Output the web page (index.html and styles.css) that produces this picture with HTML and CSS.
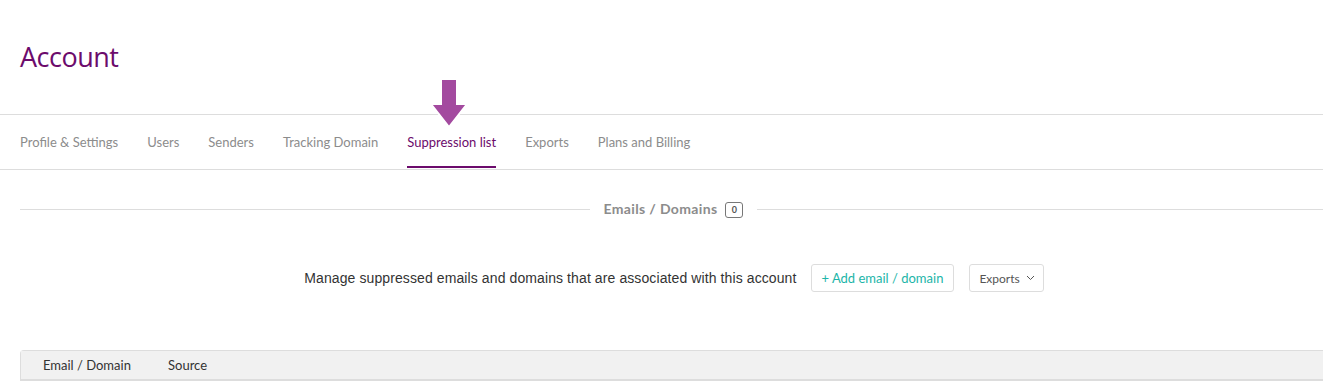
FILE: index.html
```html
<!DOCTYPE html>
<html lang="en">
<head>
  <meta charset="UTF-8">
  <title>Account - Suppression list</title>
  <link rel="stylesheet" href="styles.css">
</head>
<body>
  <header class="page-header">
    <h1>Account</h1>
  </header>

  <nav class="tabs">
    <a href="#">Profile &amp; Settings</a>
    <a href="#">Users</a>
    <a href="#">Senders</a>
    <a href="#">Tracking Domain</a>
    <a href="#" class="active">Suppression list
      <svg class="pointer" width="40" height="52" viewBox="0 0 40 52">
        <path d="M12 1h16v25h10L20 49 2 26h10z" fill="#a34a9f" stroke="#fff" stroke-width="2"/>
      </svg>
    </a>
    <a href="#">Exports</a>
    <a href="#">Plans and Billing</a>
  </nav>

  <div class="content">
    <div class="divider">
      <span class="divider-title">Emails / Domains <span class="count">0</span></span>
    </div>

    <div class="actions">
      <p>Manage suppressed emails and domains that are associated with this account</p>
      <button class="btn btn-add">+ Add email / domain</button>
      <button class="btn btn-export">Exports
        <svg width="9" height="6" viewBox="0 0 9 6"><path d="M1 1l3.5 3.5L8 1" fill="none" stroke="#555" stroke-width="1"/></svg>
      </button>
    </div>

    <div class="table">
      <div class="table-head">
        <span class="col-email">Email / Domain</span>
        <span class="col-source">Source</span>
      </div>
    </div>
  </div>
</body>
</html>
```

FILE: styles.css
```css
* {
  margin: 0;
  padding: 0;
  box-sizing: border-box;
}
body {
  background-color: #fff;
  font-family: 'Lato', sans-serif;
  overflow: hidden;
}
.page-header {
  height: 114px;
  padding: 38px 20px 0;
}
.page-header h1 {
  font-family: 'Open Sans', sans-serif;
  font-size: 27px;
  font-weight: 400;
  color: #6c0b6c;
  letter-spacing: -0.5px;
}
.tabs {
  display: flex;
  gap: 29px;
  height: 56px;
  padding: 0 20px;
  border-top: 1px solid #ddd;
  border-bottom: 1px solid #ddd;
}
.tabs a {
  position: relative;
  display: flex;
  align-items: center;
  height: 100%;
  padding-bottom: 1px;
  font-size: 13px;
  color: #8c8c8c;
  text-decoration: none;
}
.tabs a.active {
  color: #6c0b6c;
}
.tabs a.active::after {
  content: '';
  position: absolute;
  left: 0;
  right: 0;
  bottom: 1px;
  height: 2px;
  background-color: #6c0b6c;
}
.pointer {
  position: absolute;
  left: 22px;
  top: -37px;
}
.content {
  padding: 0 0 0 20px;
}
.divider {
  display: flex;
  align-items: center;
  justify-content: center;
  height: 80px;
  padding-left: 4px;
  background: linear-gradient(#ddd, #ddd) 0 39px / 100% 1px no-repeat;
}
.divider-title {
  display: flex;
  align-items: center;
  gap: 8px;
  padding: 0 14px 3px;
  background-color: #fff;
  font-size: 14px;
  font-weight: 700;
  letter-spacing: 0.35px;
  color: #8c8c8c;
}
.count {
  display: inline-block;
  width: 18px;
  height: 16px;
  margin-top: 2px;
  border: 1px solid #777;
  border-radius: 3px;
  font-size: 9px;
  line-height: 14px;
  letter-spacing: 0;
  text-align: center;
  color: #555;
}
.actions {
  display: flex;
  align-items: center;
  justify-content: center;
  gap: 15px;
  height: 56px;
  padding-left: 5px;
}
.actions p {
  font-family: 'Liberation Sans', Arial, sans-serif;
  font-size: 14px;
  letter-spacing: 0.1px;
  color: #333;
  margin-right: -1px;
}
.btn {
  display: flex;
  align-items: center;
  gap: 7px;
  height: 28px;
  padding: 0 10px;
  background-color: #fff;
  border: 1px solid #ddd;
  border-radius: 3px;
  font-family: 'Lato', sans-serif;
  font-size: 13px;
}
.btn-add {
  color: #1cb5a8;
}
.btn-export {
  color: #555;
  font-size: 12px;
  padding: 0 8px 0 9px;
  gap: 6px;
}
.table {
  margin-top: 44px;
  border: 1px solid #ddd;
  border-right: none;
  border-radius: 4px 0 0 0;
}
.table-head {
  display: flex;
  align-items: center;
  height: 29px;
  padding-bottom: 1px;
  background-color: #f1f1f1;
  border-bottom: 1px solid #ddd;
  font-size: 13px;
  color: #333;
}
.col-email {
  width: 147px;
  padding-left: 22px;
}
```
